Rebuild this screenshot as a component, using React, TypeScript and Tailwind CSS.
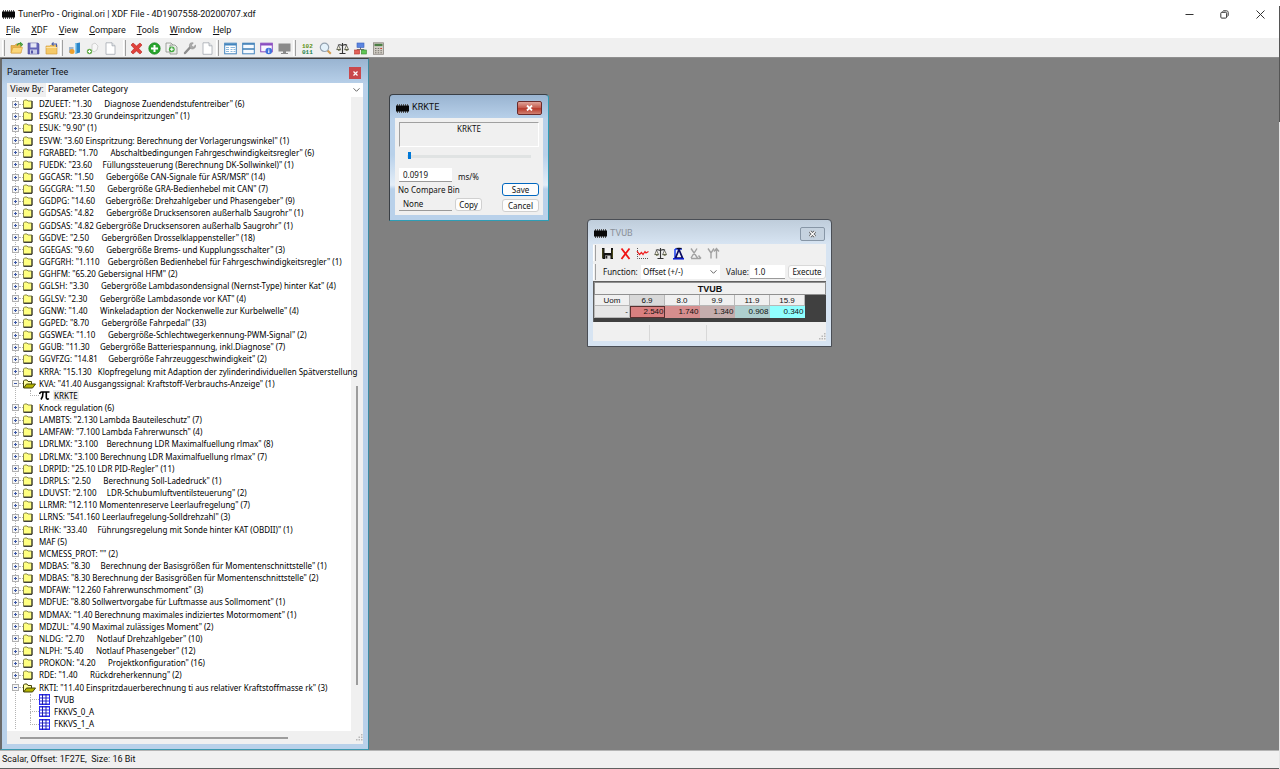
import type { ReactNode } from "react";

type TreeNode = {
  label: string;
  open?: boolean;
  items?: { name: string; kind: "scalar" | "table"; selected?: boolean }[];
};

const tree: TreeNode[] = [
  { label: 'DZUEET: "1.30      Diagnose Zuendendstufentreiber" (6)' },
  { label: 'ESGRU: "23.30 Grundeinspritzungen" (1)' },
  { label: 'ESUK: "9.90" (1)' },
  { label: 'ESVW: "3.60 Einspritzung: Berechnung der Vorlagerungswinkel" (1)' },
  { label: 'FGRABED: "1.70      Abschaltbedingungen Fahrgeschwindigkeitsregler" (6)' },
  { label: 'FUEDK: "23.60     Füllungssteuerung (Berechnung DK-Sollwinkel)" (1)' },
  { label: 'GGCASR: "1.50      Gebergöße CAN-Signale für ASR/MSR" (14)' },
  { label: 'GGCGRA: "1.50      Gebergröße GRA-Bedienhebel mit CAN" (7)' },
  { label: 'GGDPG: "14.60     Gebergröße: Drehzahlgeber und Phasengeber" (9)' },
  { label: 'GGDSAS: "4.82      Gebergröße Drucksensoren außerhalb Saugrohr" (1)' },
  { label: 'GGDSAS: "4.82 Gebergröße Drucksensoren außerhalb Saugrohr" (1)' },
  { label: 'GGDVE: "2.50      Gebergrößen Drosselklappensteller" (18)' },
  { label: 'GGEGAS: "9.60      Gebergröße Brems- und Kupplungsschalter" (3)' },
  { label: 'GGFGRH: "1.110    Gebergrößen Bedienhebel für Fahrgeschwindigkeitsregler" (1)' },
  { label: 'GGHFM: "65.20 Gebersignal HFM" (2)' },
  { label: 'GGLSH: "3.30      Gebergröße Lambdasondensignal (Nernst-Type) hinter Kat" (4)' },
  { label: 'GGLSV: "2.30      Gebergröße Lambdasonde vor KAT" (4)' },
  { label: 'GGNW: "1.40      Winkeladaption der Nockenwelle zur Kurbelwelle" (4)' },
  { label: 'GGPED: "8.70      Gebergröße Fahrpedal" (33)' },
  { label: 'GGSWEA: "1.10      Gebergröße-Schlechtwegerkennung-PWM-Signal" (2)' },
  { label: 'GGUB: "11.30     Gebergröße Batteriespannung, inkl.Diagnose" (7)' },
  { label: 'GGVFZG: "14.81     Gebergröße Fahrzeuggeschwindigkeit" (2)' },
  { label: 'KRRA: "15.130   Klopfregelung mit Adaption der zylinderindividuellen Spätverstellung' },
  {
    label: 'KVA: "41.40 Ausgangssignal: Kraftstoff-Verbrauchs-Anzeige" (1)',
    open: true,
    items: [{ name: "KRKTE", kind: "scalar", selected: true }],
  },
  { label: "Knock regulation (6)" },
  { label: 'LAMBTS: "2.130 Lambda Bauteileschutz" (7)' },
  { label: 'LAMFAW: "7.100 Lambda Fahrerwunsch" (4)' },
  { label: 'LDRLMX: "3.100    Berechnung LDR Maximalfuellung rlmax" (8)' },
  { label: 'LDRLMX: "3.100 Berechnung LDR Maximalfuellung rlmax" (7)' },
  { label: 'LDRPID: "25.10 LDR PID-Regler" (11)' },
  { label: 'LDRPLS: "2.50      Berechnung Soll-Ladedruck" (1)' },
  { label: 'LDUVST: "2.100     LDR-Schubumluftventilsteuerung" (2)' },
  { label: 'LLRMR: "12.110 Momentenreserve Leerlaufregelung" (7)' },
  { label: 'LLRNS: "541.160 Leerlaufregelung-Solldrehzahl" (3)' },
  { label: 'LRHK: "33.40     Führungsregelung mit Sonde hinter KAT (OBDII)" (1)' },
  { label: "MAF (5)" },
  { label: 'MCMESS_PROT: "" (2)' },
  { label: 'MDBAS: "8.30     Berechnung der Basisgrößen für Momentenschnittstelle" (1)' },
  { label: 'MDBAS: "8.30 Berechnung der Basisgrößen für Momentenschnittstelle" (2)' },
  { label: 'MDFAW: "12.260 Fahrerwunschmoment" (3)' },
  { label: 'MDFUE: "8.80 Sollwertvorgabe für Luftmasse aus Sollmoment" (1)' },
  { label: 'MDMAX: "1.40 Berechnung maximales indiziertes Motormoment" (1)' },
  { label: 'MDZUL: "4.90 Maximal zulässiges Moment" (2)' },
  { label: 'NLDG: "2.70      Notlauf Drehzahlgeber" (10)' },
  { label: 'NLPH: "5.40      Notlauf Phasengeber" (12)' },
  { label: 'PROKON: "4.20      Projektkonfiguration" (16)' },
  { label: 'RDE: "1.40      Rückdreherkennung" (2)' },
  {
    label: 'RKTI: "11.40 Einspritzdauerberechnung ti aus relativer Kraftstoffmasse rk" (3)',
    open: true,
    items: [
      { name: "TVUB", kind: "table" },
      { name: "FKKVS_0_A", kind: "table" },
      { name: "FKKVS_1_A", kind: "table" },
    ],
  },
];

const menus = ["File", "XDF", "View", "Compare", "Tools", "Window", "Help"];

const cells = [
  { head: "6.9", value: "2.540", className: "bg-[#d98080] outline outline-1 -outline-offset-1 outline-[#5a3030]" },
  { head: "8.0", value: "1.740", className: "bg-[#d68e8e]" },
  { head: "9.9", value: "1.340", className: "bg-[#c4adad]" },
  { head: "11.9", value: "0.908", className: "bg-[#aecfcf]" },
  { head: "15.9", value: "0.340", className: "bg-[#90ffff]" },
];

function Svg({ children, size = 13 }: { children: ReactNode; size?: number }) {
  return (
    <svg width={size} height={size} viewBox="0 0 13 13" fill="none" aria-hidden="true" className="shrink-0">
      {children}
    </svg>
  );
}

function ChipIcon() {
  return (
    <svg width="13" height="9" viewBox="0 0 13 9" aria-hidden="true" className="shrink-0">
      <path d="M1 0v9M3 0v9M5 0v9M7 0v9M9 0v9M11 0v9" stroke="#555" strokeWidth="1" transform="translate(.5 0)" />
      <rect x="0" y="1.500" width="13" height="6" fill="#080808" />
    </svg>
  );
}

const folderBody = (
  <>
    <path d="M1 3.500h4l1-1.500h5v9H1z" fill="#e9b44c" stroke="#c98f2c" strokeWidth=".6" />
    <path d="M1 11l2-5.500h9.500l-1.700 5.500z" fill="#fbd77b" stroke="#d69d35" strokeWidth=".6" />
  </>
);

const page = (
  <>
    <path d="M2 .8h6l3 3v8.500H2z" fill="#fff" stroke="#a3a8b0" strokeWidth=".8" />
    <path d="M8 .8v3h3" fill="#e3e6ea" stroke="#a3a8b0" strokeWidth=".8" />
  </>
);

const fileTools = [
  {
    name: "Open",
    icon: (
      <Svg>
        {folderBody}
        <path d="M7 3.500c1-2 2.500-2.500 3.500-1.500V.8L12.500 2.500l-2 1.700" stroke="#3f9b3a" strokeWidth="1.200" />
      </Svg>
    ),
  },
  {
    name: "Save",
    icon: (
      <Svg>
        <path d="M1 1h10l1 1v10H1z" fill="#6464b8" stroke="#4a4a98" strokeWidth=".6" />
        <rect x="3.500" y="1.200" width="6" height="4.300" fill="#e4e6f5" />
        <rect x="3" y="7.500" width="7" height="4.300" fill="#c9cce8" />
        <rect x="4" y="8.500" width="2" height="3" fill="#5858a8" />
      </Svg>
    ),
  },
  {
    name: "Open previous",
    icon: (
      <Svg>
        <path d="M1 4h4l1-1h6v9H1z" fill="#f4c968" stroke="#d0952f" strokeWidth=".6" />
        <path d="M1.300 5.500h10.500" stroke="#fce5a8" />
        <path d="M7 2h4.500v3M8.500 .4L7 2l1.500 1.600" stroke="#4b5fa8" strokeWidth="1.100" />
      </Svg>
    ),
  },
];

const binTools = [
  {
    name: "Emulator",
    icon: (
      <Svg>
        <path d="M7 1.500l5-1v10l-5 1.500z" fill="#2c86c9" />
        <path d="M7 1.500l1.500-.3v10.500l-1.500.3z" fill="#8fd0f2" />
        <rect x="1" y="5" width="4.500" height="6" fill="#9fb6cc" />
        <circle cx="4" cy="9.500" r="2.500" fill="#efa02c" />
      </Svg>
    ),
  },
  {
    name: "Add bin",
    icon: (
      <Svg>
        <path d="M6 2.500l3-1.500 3 3-1 4-3 2-2-2z" fill="#f7f7f7" stroke="#c8c8c8" strokeWidth=".8" />
        <circle cx="3.500" cy="9.500" r="2.700" fill="#6fb257" />
        <path d="M3.500 8v3M2 9.500h3" stroke="#fff" />
      </Svg>
    ),
  },
  { name: "New", icon: <Svg>{page}</Svg> },
];

const editTools = [
  {
    name: "Delete",
    icon: (
      <Svg>
        <path d="M1 3l2-2 3.500 3L10 1l2 2-3.200 3.500L12 10l-2 2-3.500-3L3 12l-2-2 3.200-3.500z" fill="#e0413b" stroke="#b52722" strokeWidth=".6" />
      </Svg>
    ),
  },
  {
    name: "Add",
    icon: (
      <Svg>
        <circle cx="6.500" cy="6.500" r="5.700" fill="#27a52d" stroke="#16801c" strokeWidth=".7" />
        <path d="M6.500 3v7M3 6.500h7" stroke="#fff" strokeWidth="2" />
      </Svg>
    ),
  },
  {
    name: "Duplicate",
    icon: (
      <Svg>
        <path d="M1 1h5l2 2v7H1z" fill="#f2f2f2" stroke="#8a9188" strokeWidth=".8" />
        <path d="M5 3h5l2 2v7H5z" fill="#e6ebe4" stroke="#8a9188" strokeWidth=".8" />
        <circle cx="6.800" cy="7.300" r="2.900" fill="#43a83f" />
        <path d="M6.800 5.500v3.600M5 7.300h3.600" stroke="#fff" strokeWidth="1.100" />
      </Svg>
    ),
  },
  {
    name: "Edit",
    icon: (
      <Svg>
        <path d="M2 11l5-5.500" stroke="#8d8d8d" strokeWidth="2.400" strokeLinecap="round" />
        <path d="M7 1.500c1-1 2.500-1 3.300-.6L8.500 3l.5 1.500 1.500.4 2-1.900c.4 1.500-.3 3-1.500 3.600-1.300.7-3 .4-3.900-.6S6.100 2.900 7 1.500z" fill="#a9a9a9" stroke="#858585" strokeWidth=".5" />
      </Svg>
    ),
  },
  { name: "Properties", icon: <Svg>{page}</Svg> },
];

const viewTools = [
  {
    name: "Tree view",
    icon: (
      <Svg>
        <rect x=".7" y="1.200" width="11.600" height="10.600" fill="#fff" stroke="#4384bd" />
        <path d="M.7 2.500h11.600" stroke="#4384bd" strokeWidth="2" />
        <path d="M2 5.500h3M2 7.500h3M2 9.500h3M6.500 5.500h4.500M6.500 7.500h2M9.500 7.500h2M6.500 9.500h2M9.500 9.500h2" stroke="#8cb8dc" />
      </Svg>
    ),
  },
  {
    name: "Split view",
    icon: (
      <Svg>
        <rect x=".7" y="1.200" width="11.600" height="10.600" fill="#f5faff" stroke="#4384bd" />
        <path d="M.7 2h11.600M.7 7h11.600" stroke="#3b7cb5" strokeWidth="1.600" />
      </Svg>
    ),
  },
  {
    name: "Info view",
    icon: (
      <Svg>
        <rect x=".7" y="1.200" width="11.600" height="8.600" fill="#faf5ff" stroke="#8a4cc0" />
        <path d="M.7 2.400h11.600" stroke="#8a4cc0" strokeWidth="2.200" />
        <circle cx="8.800" cy="9" r="3.300" fill="#3f72dc" />
        <path d="M8.800 8.300v2.700M8.800 6.700v.9" stroke="#fff" strokeWidth="1.100" />
      </Svg>
    ),
  },
  {
    name: "Monitor",
    icon: (
      <Svg>
        <path d="M.5 1.500h12v8h-4.500v1.500h2v1h-7v-1h2V9.500H.5z" fill="#8b8b8b" />
      </Svg>
    ),
  },
];

function ScaleIcon() {
  return (
    <Svg>
      <path d="M6.500 1v10M2 3.200c2-1.200 3 .3 4.500 0s2.500-1.200 4.500 0M3.500 11.500h6" stroke="#333" strokeWidth="1.100" />
      <path d="M2.500 3.200L.8 7.500h3.800zM10.500 3.200L8.700 7.500h3.800z" stroke="#444" strokeWidth=".7" fill="#f4f2dc" />
      <path d="M.5 7.500h4.400c-.4 1.600-4 1.600-4.400 0zM8.300 7.500h4.400c-.4 1.600-4 1.600-4.400 0z" fill="#555b30" />
    </Svg>
  );
}

const miscTools = [
  {
    name: "Hex editor",
    icon: (
      <svg width="13" height="13" viewBox="0 0 13 13" aria-hidden="true">
        <text x="1" y="6" fontSize="6" fontFamily="Liberation Mono, monospace" fontWeight="700" fill="#5b8f10">102</text>
        <text x="1" y="12" fontSize="6" fontFamily="Liberation Mono, monospace" fontWeight="700" fill="#23824b">011</text>
      </svg>
    ),
  },
  {
    name: "Find",
    icon: (
      <Svg>
        <path d="M8.500 8.500l3.300 3.300" stroke="#d29a4b" strokeWidth="2" />
        <circle cx="5.500" cy="5.300" r="4.200" fill="#e4f2fb" stroke="#95a2b0" strokeWidth="1.200" />
      </Svg>
    ),
  },
  { name: "Compare", icon: <ScaleIcon /> },
  {
    name: "Structure",
    icon: (
      <Svg>
        <path d="M6.500 5v2.500M3 8.500v-1h7v1" stroke="#777" />
        <rect x="3" y="1" width="7" height="4.500" fill="#5b85e0" stroke="#3b62bd" strokeWidth=".6" />
        <rect x=".6" y="8" width="5" height="4" fill="#e0625a" stroke="#b8352a" strokeWidth=".6" />
        <rect x="7.400" y="8" width="5" height="4" fill="#5fc656" stroke="#37852f" strokeWidth=".6" />
      </Svg>
    ),
  },
  {
    name: "Calculator",
    icon: (
      <Svg>
        <rect x="1.500" y=".8" width="10" height="11.500" fill="#d2cec6" stroke="#8b8780" strokeWidth=".8" />
        <rect x="2.500" y="1.800" width="8" height="2.300" fill="#4c7f45" />
        <path d="M3 6.500h7M3 8.700h7M3 10.800h7" stroke="#77746d" strokeDasharray="1.500 1.200" />
        <path d="M8.500 6.500h1.500" stroke="#d8412f" />
      </Svg>
    ),
  },
];

const tableTools = [
  {
    name: "Save table",
    icon: (
      <Svg>
        <path d="M1 1h11v11H2l-1-1z" fill="#111" />
        <rect x="3.500" y="1" width="6.500" height="5" fill="#f4f4f4" />
        <path d="M1.800 2v9M11.300 3v8" stroke="#55551c" />
        <rect x="4" y="8.500" width="5.500" height="3.500" fill="#ddd" />
        <rect x="4.500" y="9" width="1.800" height="2.500" fill="#222" />
      </Svg>
    ),
  },
  {
    name: "Discard",
    icon: (
      <Svg>
        <path d="M2.500 1.500l8 10.500M10.500 1.500l-8 10.500" stroke="#f01414" strokeWidth="1.800" />
      </Svg>
    ),
  },
  {
    name: "Graph",
    icon: (
      <Svg>
        <path d="M1.500 1v10.500h11" stroke="#555" strokeDasharray="1 1" />
        <path d="M1 4l2.500 3.500 2-2L7 7.500l2-3 1 1.500 2.500-1.500" stroke="#ee1a1a" strokeWidth="1.200" />
      </Svg>
    ),
  },
  { name: "Compare table", icon: <ScaleIcon /> },
  {
    name: "Delta",
    icon: (
      <Svg>
        <path d="M3 2v9.500M3 2h7" stroke="#1a3cf0" strokeWidth="1.500" />
        <path d="M7 2.500l3.500 8.500h-7z" fill="#f4f4f4" stroke="#0a0a60" strokeWidth="1.700" />
        <path d="M4.500 1.500h5" stroke="#0a0a20" strokeWidth="1.300" />
        <path d="M1 11.800h11" stroke="#0a1ad0" strokeWidth="1.500" />
      </Svg>
    ),
  },
  {
    name: "X axis",
    icon: (
      <Svg>
        <path d="M2 1.500l6.500 9.500M8 1.500L2 11M2 11.500h9.500M9.500 8.500l2.500 3" stroke="#a2a2a2" strokeWidth="1.400" />
      </Svg>
    ),
  },
  {
    name: "Y axis",
    icon: (
      <Svg>
        <path d="M1 1.500l3 4.500 3-4.500M4 6v5.500M9.500 2v9.500M7 4.500l2.500-3 2.500 3" stroke="#a2a2a2" strokeWidth="1.400" />
      </Svg>
    ),
  },
];

function ToolGroup({ tools, className }: { tools: { name: string; icon: ReactNode }[]; className: string }) {
  return (
    <div className={`flex h-full items-center ${className}`}>
      {tools.map(({ name, icon }) => (
        <button key={name} type="button" aria-label={name} className="flex flex-1 items-center justify-center">
          {icon}
        </button>
      ))}
    </div>
  );
}

function Grip() {
  return <span className="h-4 w-[3px] border-r border-l border-r-[#a0a0a0] border-l-white" />;
}

function FolderIcon({ open }: { open?: boolean }) {
  return (
    <svg width="13" height="10" viewBox="0 0 13 10" aria-hidden="true" className="shrink-0">
      {open ? (
        <>
          <path d="M.5 9V2l1-1h2.500l1 1.500h3.500V5" fill="#ffffa0" stroke="#45450a" />
          <path d="M.7 9l2.800-4h9l-3 4z" fill="#b5b500" stroke="#45450a" />
        </>
      ) : (
        <>
          <path d="M.5 9V2l1-1h2.500l1 1h4v7z" fill="#ffff80" stroke="#88884a" />
          <path d="M.5 9.300h8.500V2" fill="none" stroke="#222" />
        </>
      )}
    </svg>
  );
}

function Expander({ open }: { open?: boolean }) {
  return (
    <svg width="7" height="7" viewBox="0 0 7 7" aria-hidden="true">
      <rect x=".5" y=".5" width="6" height="6" fill="#f6f6f6" stroke="#b0b0b0" />
      <path d={open ? "M2 3.500h3" : "M2 3.500h3M3.500 2v3"} stroke="#3b57a6" />
    </svg>
  );
}

function LeafIcon({ kind }: { kind: "scalar" | "table" }) {
  return (
    <svg width="11" height="11" viewBox="0 0 11 11" fill="none" aria-hidden="true" className="shrink-0">
      {kind === "scalar" ? (
        <path d="M.5 4c.5-1.500 1-2 2-2h8M4 2.500c0 3-.3 5-2 7M7.300 2v5.500c0 1.800 1.500 2 2.500 1" stroke="#000" strokeWidth="1.600" />
      ) : (
        <>
          <rect width="11" height="11" fill="#2a2af0" />
          <path d="M1 2.500h9M1 5.500h9M1 8.500h9" stroke="#fff" strokeWidth="1.800" />
          <path d="M3.500 0v11M7 0v11" stroke="#2020a0" />
        </>
      )}
    </svg>
  );
}

function TreeView() {
  return (
    <ul className="flex min-h-0 flex-1 flex-col bg-white pt-px pb-px text-black">
      {tree.flatMap(({ label, open, items = [] }, i) => [
        <li key={i} className="flex min-h-0 flex-1 items-center whitespace-pre">
          <span className="flex h-full w-4 shrink-0 items-center bg-[linear-gradient(#b4b4b4_1px,transparent_1px)] bg-[length:1px_2px] bg-[position:8px_0] bg-repeat-y pl-[5px]">
            <button type="button" aria-label={open ? "Collapse" : "Expand"} aria-expanded={!!open}>
              <Expander open={open} />
            </button>
            <span className="w-1 border-b border-dotted border-[#b0b0b0]" />
          </span>
          <FolderIcon open={open} />
          <span className="ml-[3px]">{label}</span>
        </li>,
        ...items.map((item, j) => (
          <li key={`${i}-${j}`} className="flex min-h-0 flex-1 items-center whitespace-pre">
            <span className="h-full w-[23px] shrink-0 bg-[linear-gradient(#b4b4b4_1px,transparent_1px)] bg-[length:1px_2px] bg-[position:8px_0] bg-repeat-y" />
            <span className="flex h-full w-[9px] shrink-0 flex-col">
              <span className="flex-1 border-b border-l border-dotted border-[#b0b0b0]" />
              <span className={j < items.length - 1 ? "flex-1 border-l border-dotted border-[#b0b0b0]" : "flex-1"} />
            </span>
            <LeafIcon kind={item.kind} />
            <span className={item.selected ? "ml-[3px] bg-[#f0f0f0] px-px leading-[11px]" : "ml-[3px] px-px"}>{item.name}</span>
          </li>
        )),
      ])}
    </ul>
  );
}

function SizeGrip() {
  return (
    <svg width="8" height="8" viewBox="0 0 8 8" fill="#b8b8b8" aria-hidden="true">
      <path d="M6 0h1.500v1.500H6zM3.500 2.500H5V4H3.500zM6 2.500h1.500V4H6zM1 5h1.500v1.500H1zM3.500 5H5v1.500H3.500zM6 5h1.500v1.500H6z" />
    </svg>
  );
}

function Chevron() {
  return (
    <svg width="7" height="5" viewBox="0 0 7 5" fill="none" aria-hidden="true" className="pointer-events-none absolute top-1/2 right-[3px] -translate-y-1/2">
      <path d="M.5 .8l3 3 3-3" stroke="#555" strokeWidth=".9" />
    </svg>
  );
}

function ParameterPanel() {
  return (
    <aside className="flex w-[369px] shrink-0 flex-col border-t border-r border-b border-t-[#404040] border-r-[#3c8ba0] border-b-[#3c9ab0] border-l-2 border-l-[#6a6a6a] bg-[#b9d1ea] bg-[linear-gradient(#99b4d1,#b9d1ea_26px)] px-[5px] pb-[5px]">
      <div className="flex h-6 items-center justify-between pt-1 font-[Roboto,sans-serif] text-[9px]">
        <h2>Parameter Tree</h2>
        <button type="button" aria-label="Close panel" className="mr-[2px] flex h-3 w-3 items-center justify-center bg-[#c9484c]">
          <svg width="5" height="5" viewBox="0 0 5 5" aria-hidden="true">
            <path d="M.5 .5l4 4M4.500 .5l-4 4" stroke="#fff" strokeWidth="1.200" />
          </svg>
        </button>
      </div>
      <div className="flex min-h-0 flex-1 flex-col bg-[#f0f0f0]">
        <div className="flex h-[14px] items-center font-[Roboto,sans-serif] text-[9px]">
          <label htmlFor="view-by" className="w-[39px] pl-[3px]">View By:</label>
          <div className="relative h-full flex-1 bg-white">
            <select id="view-by" className="h-full w-full appearance-none bg-transparent pl-[2px]">
              <option>Parameter Category</option>
            </select>
            <Chevron />
          </div>
        </div>
        <div className="flex min-h-0 flex-1">
          <div className="flex min-h-0 w-[344px] flex-col">
            <TreeView />
          </div>
          <div className="flex flex-1 flex-col items-center">
            <span className="mt-[289px] h-[299px] w-[2px] bg-[#9c9c9c]" />
          </div>
        </div>
        <div className="flex h-[13px] items-center justify-between pl-[13px]">
          <span className="h-[2px] w-[268px] bg-[#9c9c9c]" />
          <SizeGrip />
        </div>
      </div>
    </aside>
  );
}

function KrkteWindow() {
  return (
    <section className="absolute top-[36px] left-[20px] w-[160px] rounded-t-[4px] border border-[#3a3f45] border-r-[#2e9db5] border-b-[#2e9db5] bg-[linear-gradient(#99b4d1,#b9d1ea_24px,#b9d1ea_60px,#e3edf7_90px,#b9d1ea_94px)] px-[5px] pb-[5px]">
      <header className="flex h-[23px] items-center gap-[3px] pt-[3px] pl-px font-[Roboto,sans-serif] text-[9px]">
        <ChipIcon />
        <h2>KRKTE</h2>
        <button type="button" aria-label="Close KRKTE" className="mr-px ml-auto flex h-[14px] w-[25px] items-center justify-center rounded-[2px] border border-[#6a2a2a] bg-[linear-gradient(#e0a49a,#c4584a_50%,#b83a2c_55%,#d08070)]">
          <svg width="7" height="6" viewBox="0 0 7 6" aria-hidden="true">
            <path d="M1 .5l5 5M6 .5l-5 5" stroke="#fff" strokeWidth="1.800" />
          </svg>
        </button>
      </header>
      <div className="bg-[#f0f0f0] px-1 pt-1 pb-[3px] text-[8px] leading-[10px]">
        <div className="h-[25px] border border-t-[#a0a0a0] border-r-white border-b-white border-l-[#a0a0a0] pt-px text-center">
          KRKTE
        </div>
        <div className="relative mx-2 my-[5px] flex h-2 items-center">
          <span className="h-[3px] w-full bg-[#e0e3e3]" />
          <span className="absolute top-0 left-[1px] h-[7px] w-[3px] bg-[#0078d7]" />
          <input type="range" aria-label="KRKTE value" defaultValue={0} className="absolute inset-0 h-full w-full opacity-0" />
        </div>
        <div className="mt-2 flex items-end gap-[6px]">
          <input aria-label="Value" defaultValue="0.0919" className="h-[14px] w-[53px] border-b border-[#9a9a9a] bg-white pl-1" />
          <span>ms/%</span>
        </div>
        <div className="flex justify-between">
          <div>
            <p className="-ml-px py-px leading-[13px]">No Compare Bin</p>
            <div className="flex items-end gap-[3px]">
              <input aria-label="Compare value" defaultValue="None" readOnly className="h-[14px] w-[53px] border-b border-[#9a9a9a] bg-[#f0f0f0] pl-1" />
              <button type="button" className="h-[13px] w-[27px] rounded-[3px] border border-[#d0d0d0] bg-[#fdfdfd]">Copy</button>
            </div>
          </div>
          <div className="flex flex-col gap-[3px] pt-px">
            <button type="button" className="h-[13px] w-[37px] rounded-[3px] border border-[#0067c0] bg-[#fdfdfd]">Save</button>
            <button type="button" className="h-[13px] w-[37px] rounded-[3px] border border-[#d0d0d0] bg-[#fdfdfd]">Cancel</button>
          </div>
        </div>
      </div>
    </section>
  );
}

function TvubWindow() {
  return (
    <section className="absolute top-[161px] left-[218px] w-[245px] rounded-t-[4px] border border-[#4a4e55] bg-[linear-gradient(#bfcddb,#d7e4f2_24px)] px-[5px] pb-[5px]">
      <header className="flex h-[24px] items-center gap-[3px] pt-[3px] pl-px font-[Roboto,sans-serif] text-[9px] text-[#8a9099]">
        <ChipIcon />
        <h2>TVUB</h2>
        <button type="button" aria-label="Close TVUB" className="mr-px ml-auto flex h-[14px] w-[25px] items-center justify-center rounded-[2px] border border-[#8796a6] bg-[#c5d2df]">
          <svg width="9" height="8" viewBox="0 0 9 8" aria-hidden="true">
            <path d="M2 1.500l5 5M7 1.500l-5 5" stroke="#555" strokeWidth="3" />
            <path d="M2 1.500l5 5M7 1.500l-5 5" stroke="#fff" strokeWidth="1.400" />
          </svg>
        </button>
      </header>
      <div className="bg-[#f0f0f0] text-[8px]">
        <div className="flex h-[18px] items-center">
          <Grip />
          <ToolGroup tools={tableTools} className="ml-[3px] w-[123px]" />
        </div>
        <div className="flex h-[19px] items-center">
          <Grip />
          <label htmlFor="function" className="ml-[7px] w-[38px]">Function:</label>
          <div className="relative h-[14px] w-[79px] bg-white">
            <select id="function" className="h-full w-full appearance-none bg-transparent pl-[2px]">
              <option>Offset (+/-)</option>
            </select>
            <Chevron />
          </div>
          <label htmlFor="value" className="ml-[6px] w-[24px]">Value:</label>
          <input id="value" defaultValue="1.0" className="h-[14px] w-[35px] border-b border-[#9a9a9a] bg-white pl-1" />
          <button type="button" className="ml-[3px] h-[14px] flex-1 rounded-[3px] border border-[#d8d8d8] bg-[#fdfdfd]">Execute</button>
        </div>
        <div className="border-t border-l border-[#606060] bg-[#404040] pb-[4px]">
          <table className="w-full table-fixed border-collapse font-['Liberation_Sans',Arial,sans-serif] leading-[10px]">
            <colgroup>
              <col className="w-[35px]" />
              {cells.map(({ head }) => (
                <col key={head} className="w-[35px]" />
              ))}
              <col />
            </colgroup>
            <thead>
              <tr className="h-[12px] bg-[#f0f0f0]">
                <th colSpan={7} className="border border-[#909090] text-[9px] font-bold">TVUB</th>
              </tr>
              <tr className="h-[11px] bg-[#f0f0f0]">
                <th className="border border-[#b8b8b8] pt-px font-normal leading-[9px]">Uom</th>
                {cells.map(({ head }, i) => (
                  <th key={head} className={`border border-[#b8b8b8] pt-px font-normal leading-[9px] ${i === 0 ? "bg-[#d8d8d8]" : ""}`}>
                    {head}
                  </th>
                ))}
                <td className="bg-[#404040]" />
              </tr>
            </thead>
            <tbody>
              <tr className="h-[12px]">
                <th className="border border-[#b8b8b8] bg-[#e6e6e6] pr-px text-right font-normal">-</th>
                {cells.map(({ head, value, className }) => (
                  <td key={head} className={`pr-px text-right ${className}`}>{value}</td>
                ))}
                <td />
              </tr>
            </tbody>
          </table>
        </div>
        <footer className="flex h-[19px] items-stretch pt-[3px]">
          <span className="w-[57px] border-r border-[#d8d8d8]" />
          <span className="w-[57px] border-r border-[#d8d8d8]" />
          <span className="flex flex-1 items-end justify-end">
            <SizeGrip />
          </span>
        </footer>
      </div>
    </section>
  );
}

export default function App() {
  return (
    <div className="flex h-screen overflow-hidden bg-white font-['Noto_Sans','Open_Sans',sans-serif] text-[8px] text-[#111]">
      <div className="flex min-w-0 flex-1 flex-col">
        <header className="mt-[6px] flex h-[17px] items-center gap-[3px] pl-[2px] font-[Roboto,sans-serif] text-[9px]">
          <ChipIcon />
          <h1>TunerPro - Original.ori | XDF File - 4D1907558-20200707.xdf</h1>
          <div className="ml-auto flex items-center">
            <button type="button" aria-label="Minimize" className="flex w-[35px] justify-center">
              <svg width="9" height="9" viewBox="0 0 9 9" aria-hidden="true">
                <path d="M.5 4.500h8" stroke="#333" />
              </svg>
            </button>
            <button type="button" aria-label="Restore" className="flex w-[35px] justify-center">
              <svg width="9" height="9" viewBox="0 0 9 9" fill="none" aria-hidden="true">
                <rect x=".8" y="2.300" width="5.800" height="5.800" rx="1" stroke="#333" />
                <path d="M2.500 1.500C3 .8 3.500.8 4 .8h2.500c1 0 1.700.7 1.700 1.700V5c0 .6-.2 1.100-.8 1.500" stroke="#333" />
              </svg>
            </button>
            <button type="button" aria-label="Close" className="flex w-[37px] justify-center">
              <svg width="9" height="9" viewBox="0 0 9 9" aria-hidden="true">
                <path d="M.5 .5l8 8M8.500 .5l-8 8" stroke="#333" />
              </svg>
            </button>
          </div>
        </header>
        <nav className="flex h-[15px] items-center gap-[11px] pl-[6px] font-[Roboto,sans-serif] text-[9px]">
          {menus.map((menu) => (
            <button key={menu} type="button">
              <span className="underline">{menu[0]}</span>
              {menu.slice(1)}
            </button>
          ))}
        </nav>
        <div className="flex h-5 items-center border-b border-[#8f8f8f] bg-[#f0f0f0] pt-px pl-[2px]">
          <Grip />
          <ToolGroup tools={fileTools} className="ml-[3px] w-[52px]" />
          <Grip />
          <ToolGroup tools={binTools} className="ml-[3px] w-[53px]" />
          <span className="ml-1" />
          <Grip />
          <ToolGroup tools={editTools} className="ml-[2px] w-[88px]" />
          <Grip />
          <ToolGroup tools={viewTools} className="ml-[3px] w-[71px]" />
          <Grip />
          <ToolGroup tools={miscTools} className="ml-[3px] w-[88px]" />
        </div>
        <main className="flex min-h-0 flex-1 bg-[#808080]">
          <ParameterPanel />
          <div className="relative flex-1">
            <KrkteWindow />
            <TvubWindow />
          </div>
        </main>
        <footer className="flex h-[19px] items-center border-t border-b border-t-[#b4b4b4] border-b-[#606060] bg-[#f0f0f0] pl-[2px] font-[Roboto,sans-serif] text-[9px] whitespace-pre">
          Scalar, Offset: 1F27E,  Size: 16 Bit
        </footer>
      </div>
      {/* window edge */}
      <div className="mt-[6px] flex w-px flex-col">
        <span className="h-[116px] bg-[#555]" />
        <span className="flex-1 bg-[#e6e6e6]" />
      </div>
    </div>
  );
}
